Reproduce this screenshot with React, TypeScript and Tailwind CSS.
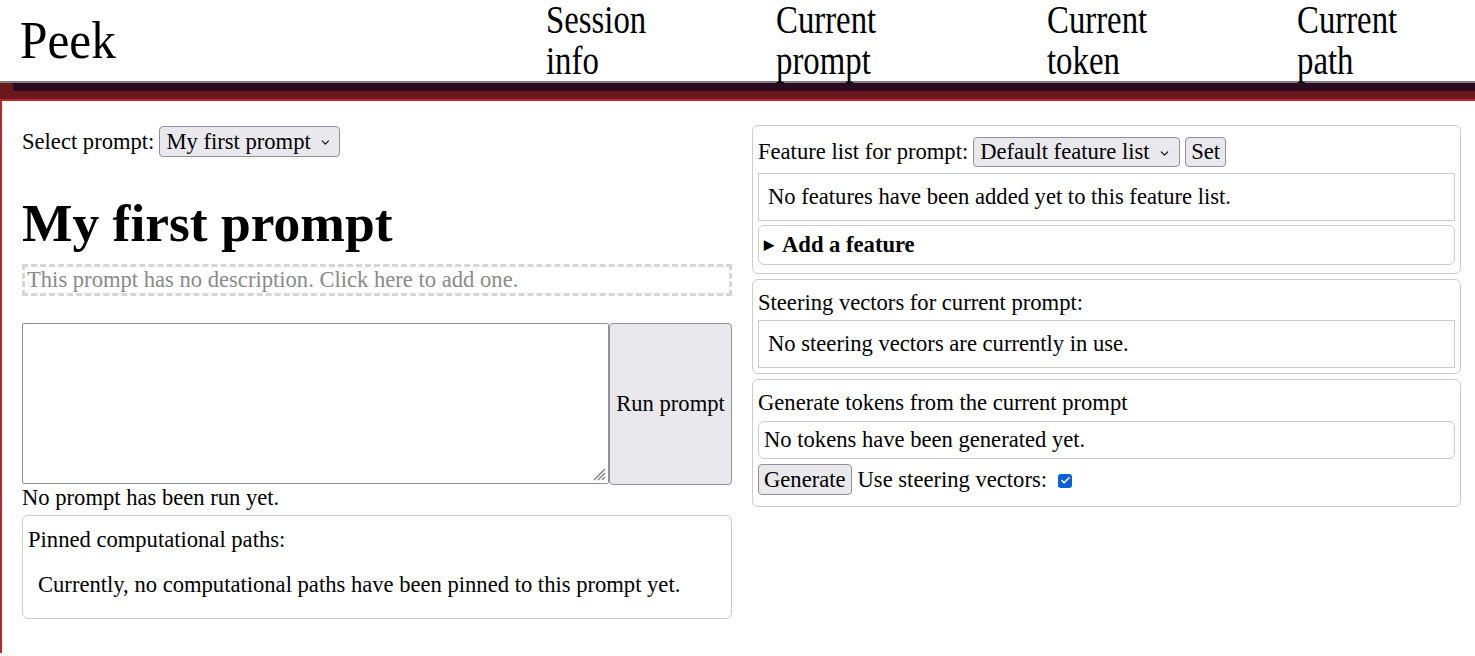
import { ChevronDown, Check } from 'lucide-react';

const serif = { fontFamily: '"Liberation Serif", "Times New Roman", serif' };

const NavItem = ({ top, bottom, width }: { top: string; bottom: string; width: string }) => (
  <div className={`${width} shrink-0`}>
    <div className="origin-left scale-x-[0.8] -mt-[1px] text-[41px] leading-[40.5px] whitespace-nowrap">
      <div>{top}</div>
      <div>{bottom}</div>
    </div>
  </div>
);

const FakeSelect = ({ label, className }: { label: string; className: string }) => (
  <div
    className={`flex items-center justify-between rounded-[4px] border border-[#8f8f9d] bg-[#e9e9ed] pl-[6px] pr-[8px] ${className}`}
  >
    <span className="whitespace-nowrap">{label}</span>
    <ChevronDown size={13} strokeWidth={2} className="ml-[8px] mt-[2px]" />
  </div>
);

export default function App() {
  return (
    <div style={serif} className="min-h-[656px] bg-white text-[22.6px] leading-[26px] text-black">
      {/* header */}
      <header className="flex h-[83px] border-b-2 border-[#808080]">
        <div className="w-[546px] shrink-0 pl-[20px] pt-[14px]">
          <div className="origin-left scale-x-[0.93] text-[53px] leading-[53px]">Peek</div>
        </div>
        <NavItem top="Session" bottom="info" width="w-[230px]" />
        <NavItem top="Current" bottom="prompt" width="w-[271px]" />
        <NavItem top="Current" bottom="token" width="w-[250px]" />
        <NavItem top="Current" bottom="path" width="w-[150px]" />
      </header>

      {/* decorative bands */}
      <div className="h-[8px] bg-[#6a181c] pl-[13px]">
        <div className="h-full bg-[#2b0a22]" />
      </div>
      <div className="h-[8px] bg-[#6a181c]" />

      {/* main */}
      <main className="flex min-h-[554px] gap-[20px] border-l-2 border-t-2 border-[#c0242b] pl-[20px]">
        {/* left column */}
        <section className="w-[710px] shrink-0 pt-[25px]">
          <div className="flex h-[31px] items-center">
            <span className="mr-[5px]">Select prompt:</span>
            <FakeSelect label="My first prompt" className="h-[31px] w-[181px]" />
          </div>

          <h1 className="mt-[36px] text-[53.5px] font-bold leading-[61px]">My first prompt</h1>

          <div className="mt-[10px] border-[3px] border-dashed border-[#d6d6d6] pl-[2px] text-[#8a8a8a]">
            This prompt has no description. Click here to add one.
          </div>

          <div className="mt-[27px] flex">
            <div className="relative h-[161px] w-[587px] rounded-[2px] border border-[#8f8f9d] bg-white">
              <svg className="absolute bottom-[2px] right-[2px]" width="16" height="16" viewBox="0 0 16 16">
                <path d="M15 4 L4 15 M15 8 L8 15 M15 12 L12 15" stroke="#7a7a7a" strokeWidth="1.3" />
              </svg>
            </div>
            <button className="h-[162px] w-[123px] rounded-[4px] border border-[#8f8f9d] bg-[#e9e9ed] text-center">
              Run prompt
            </button>
          </div>

          <div>No prompt has been run yet.</div>

          <div className="mt-[4px] rounded-[6px] border border-[#cccccc] pb-[20px] pl-[5px] pt-[11px]">
            <div>Pinned computational paths:</div>
            <div className="mt-[19px] pl-[10px]">
              Currently, no computational paths have been pinned to this prompt yet.
            </div>
          </div>
        </section>

        {/* right column */}
        <section className="w-[709px] shrink-0 pt-[24px]">
          <div className="rounded-[6px] border border-[#cccccc] px-[5px] pb-[8px] pt-[11px]">
            <div className="flex h-[30px] items-center">
              <span className="mr-[5px]">Feature list for prompt:</span>
              <FakeSelect label="Default feature list" className="h-[30px] w-[207px]" />
              <button className="ml-[5px] h-[30px] rounded-[4px] border border-[#8f8f9d] bg-[#e9e9ed] px-[5px]">
                Set
              </button>
            </div>
            <div className="mt-[6px] border border-[#cccccc] px-[9px] py-[10px]">
              No features have been added yet to this feature list.
            </div>
            <div className="mt-[4px] flex items-center rounded-[6px] border border-[#cccccc] py-[6px] pl-[5px] font-bold">
              <span className="mr-[8px] text-[13px] leading-[26px]">▶</span>
              <span>Add a feature</span>
            </div>
          </div>

          <div className="mt-[5px] rounded-[6px] border border-[#cccccc] px-[5px] pb-[5px] pt-[10px]">
            <div>Steering vectors for current prompt:</div>
            <div className="mt-[4px] border border-[#cccccc] px-[9px] py-[10px]">
              No steering vectors are currently in use.
            </div>
          </div>

          <div className="mt-[5px] rounded-[6px] border border-[#cccccc] px-[5px] pb-[11px] pt-[10px]">
            <div>Generate tokens from the current prompt</div>
            <div className="mt-[5px] rounded-[6px] border border-[#cccccc] px-[5px] py-[5px]">
              No tokens have been generated yet.
            </div>
            <div className="mt-[5px] flex h-[31px] items-center">
              <button className="h-[31px] rounded-[4px] border border-[#8f8f9d] bg-[#e9e9ed] px-[5px]">
                Generate
              </button>
              <span className="ml-[6px]">Use steering vectors:</span>
              <span className="ml-[11px] mt-[2px] flex h-[14px] w-[14px] items-center justify-center rounded-[3px] bg-[#0b62d8]">
                <Check size={11} strokeWidth={3.5} color="white" />
              </span>
            </div>
          </div>
        </section>
      </main>
    </div>
  );
}
